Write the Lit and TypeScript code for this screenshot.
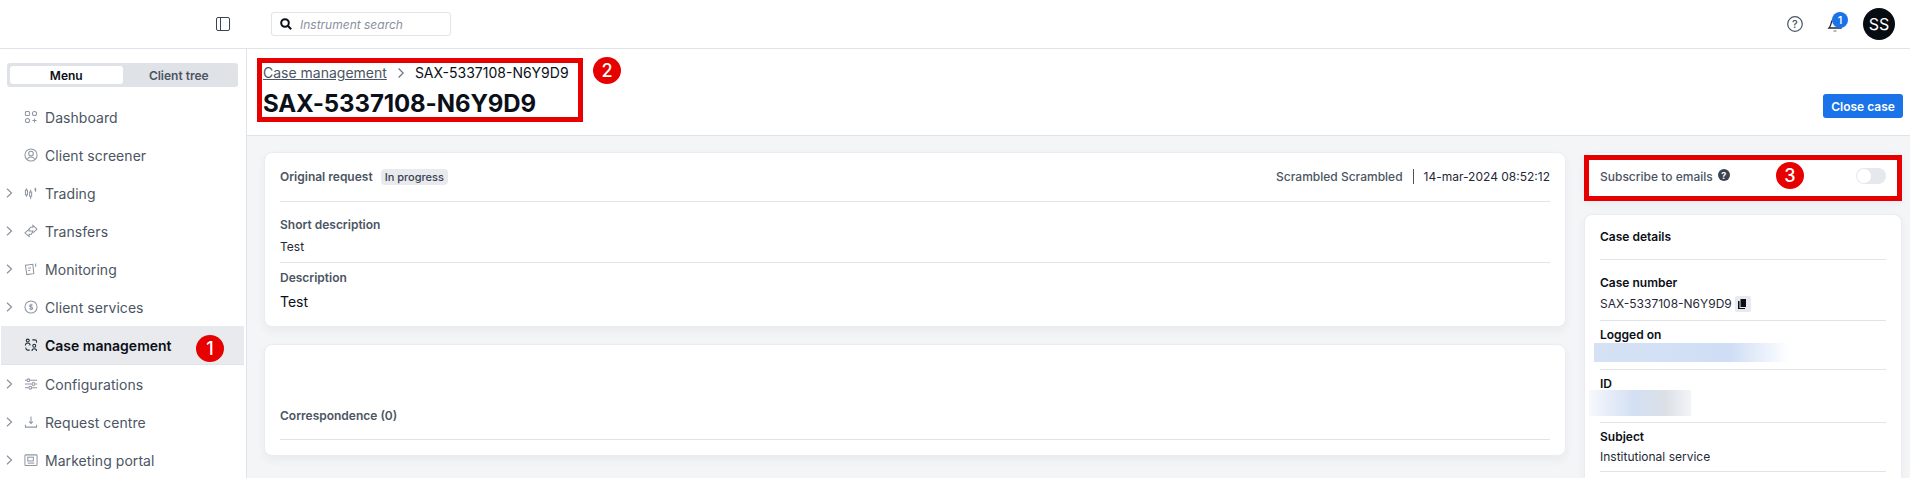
import { LitElement, html, css, svg } from "lit";
import { customElement } from "lit/decorators.js";

const ICONS: Record<string, unknown> = {
  dashboard: svg`<rect x="1.5" y="1.5" width="4.5" height="4.5" rx="1.2"/><rect x="9" y="1.5" width="4.5" height="4.5" rx="2.2"/><rect x="1.5" y="9" width="4.5" height="4.5" rx="2.2"/><path d="M11.2 9v4.5M9 11.2h4.5"/>`,
  client: svg`<circle cx="7.5" cy="7.5" r="6.5"/><circle cx="7.5" cy="6" r="2.5"/><path d="M3.500 12.500c.8-2 2.200-2.800 4-2.800s3.200.8 4 2.800"/>`,
  trading: svg`<rect x="1.500" y="4.500" width="2.200" height="5"/><path d="M2.600 2.500v2M2.600 9.500v2"/><rect x="6" y="6.500" width="2.200" height="4.500"/><path d="M7.100 4v2.500M7.100 11v3"/><path d="M13 3c-1.200-.6-1.800.4-.8 1s.4 1.700-.8 1M12.400 2v4.200"/>`,
  transfers: svg`<path d="M1 9.500 5.500 5.500V7.500H9.500L8 11H5.500V13.500Z"/><path d="M14 5.500 9.500 1.500V3.500H7L5.500 5.500"/><path d="M9.500 9.500 14 5.500"/>`,
  monitoring: svg`<path d="M1.500 3.500 9.500 2.500 10.500 12.500 3 13.500Z"/><path d="M4.500 6.500h3M4.500 9h2"/><path d="M12.500 1.500v3.500"/>`,
  services: svg`<circle cx="7.500" cy="7.500" r="6.500"/><path d="M9.200 5.800c-.6-.8-3.200-1-3.200.5s3.300.9 3.300 2.500-2.900 1.300-3.500.4M7.500 4v7"/>`,
  cases: svg`<circle cx="4" cy="2.800" r="1.600"/><path d="M1.500 8c0-1.800 1-2.600 2.500-2.600S6.500 6.200 6.500 8"/><circle cx="11" cy="8.300" r="1.600"/><path d="M8.500 14c0-1.800 1-2.600 2.500-2.600s2.500.8 2.500 2.600"/><path d="M9 2h2.500a2 2 0 0 1 2 2v1M6 13H4a2 2 0 0 1-2-2v-.800"/>`,
  config: svg`<path d="M1 3.500h2M6.500 3.500h7.500M1 7.500h7.500M12 7.500h2M1 11.500h4M8.500 11.500h5.500"/><circle cx="4.700" cy="3.500" r="1.500"/><circle cx="10.200" cy="7.500" r="1.500"/><circle cx="6.700" cy="11.500" r="1.500"/>`,
  request: svg`<path d="M7.500 1.500v7.500M5.500 7l2 2 2-2M1.500 10.500v2.500h12v-2.500"/>`,
  marketing: svg`<rect x="1" y="2" width="13" height="11.500" rx="1"/><rect x="4" y="4.500" width="6" height="4"/><path d="M4 10.800h7"/>`,
};

const NAV = [
  { label: "Dashboard", icon: "dashboard" },
  { label: "Client screener", icon: "client" },
  { label: "Trading", icon: "trading", more: true },
  { label: "Transfers", icon: "transfers", more: true },
  { label: "Monitoring", icon: "monitoring", more: true },
  { label: "Client services", icon: "services", more: true },
  { label: "Case management", icon: "cases", active: true },
  { label: "Configurations", icon: "config", more: true },
  { label: "Request centre", icon: "request", more: true },
  { label: "Marketing portal", icon: "marketing", more: true },
];

@customElement("app-root")
export class AppRoot extends LitElement {
  static styles = css`
    :host {
      display: block;
      position: relative;
      height: 478px;
      overflow: hidden;
      background: #fff;
      font-family: Inter, "Liberation Sans", sans-serif;
      font-size: 13px;
      color: #0b0f17;
    }
    .top {
      height: 48px;
      border-bottom: 1px solid #e0e3e9;
      display: flex;
      align-items: center;
    }
    .panel {
      margin-left: 216px;
      width: 12px;
      height: 12px;
      border: 1px solid #3b4453;
      border-radius: 2px;
      display: flex;
    }
    .panel i { width: 3px; border-right: 1px solid #3b4453; }
    .search {
      margin-left: 41px;
      width: 170px;
      height: 22px;
      border: 1px solid #e0e3e9;
      border-radius: 3px;
      display: flex;
      align-items: center;
      gap: 8px;
      padding-left: 8px;
      color: #8a919e;
      font-style: italic;
      font-size: 12px;
    }
    .search svg { fill: none; stroke: #0b0f17; stroke-width: 2; }
    .top-right {
      margin-left: auto;
      margin-right: 15px;
      display: flex;
      align-items: center;
    }
    .help { fill: none; stroke: #4b5563; stroke-width: 1.2; margin-right: 24px; }
    .help text {
      font: 500 11px Inter, sans-serif;
      fill: #4b5563;
      stroke: none;
    }
    .bell { position: relative; width: 20px; height: 20px; margin-right: 16px; }
    .bell svg { fill: none; stroke: #1f2937; stroke-width: 1.3; }
    .bell .clap { stroke: #8a919e; }
    .bell span {
      position: absolute;
      top: -2px;
      left: 5px;
      width: 16px;
      height: 16px;
      border-radius: 50%;
      background: #1a73e8;
      color: #fff;
      font-size: 11px;
      font-weight: 500;
      display: flex;
      align-items: center;
      justify-content: center;
    }
    .avatar {
      width: 32px;
      height: 32px;
      border-radius: 50%;
      background: #070b12;
      color: #fff;
      font-size: 16px;
      display: flex;
      align-items: center;
      justify-content: center;
    }
    .body { display: flex; height: 429px; }
    .side {
      width: 246px;
      flex: none;
      border-right: 1px solid #e0e3e9;
      padding-top: 14px;
    }
    .seg {
      margin: 0 8px 0 7px;
      height: 24px;
      background: #dfe2e6;
      border-radius: 3px;
      display: flex;
      padding: 3px;
      box-sizing: border-box;
      font-size: 12px;
      font-weight: 600;
      color: #4b5563;
    }
    .seg div {
      flex: 1;
      display: flex;
      align-items: center;
      justify-content: center;
      border-radius: 3px;
    }
    .seg .on { background: #fff; color: #0b0f17; }
    .nav { margin-top: 11px; }
    .item {
      height: 38px;
      margin: 0 2px 0 1px;
      display: flex;
      align-items: center;
      font-size: 14px;
      color: #4b5563;
      letter-spacing: 0.05px;
    }
    .item.active {
      background: #e8eaed;
      color: #0b0f17;
      font-weight: 600;
      border-bottom: 1px solid #e0e3e9;
      letter-spacing: 0;
    }
    .chev { width: 23px; flex: none; padding-left: 5px; box-sizing: border-box; display: flex; }
    .chev svg { fill: none; stroke: #8a919e; stroke-width: 1.2; }
    .ico { fill: none; stroke: #8f96a2; stroke-width: 1.1; margin-right: 7px; flex: none; }
    .active .ico { stroke: #1f2937; }
    .content { flex: 1; display: flex; flex-direction: column; background: #f4f5f7; min-width: 0; }
    .head {
      height: 86px;
      background: #fff;
      border-bottom: 1px solid #e0e3e9;
      padding-left: 16px;
      padding-right: 7px;
      display: flex;
      justify-content: space-between;
    }
    .crumbs {
      padding-top: 15px;
      display: flex;
      align-items: center;
      font-size: 14px;
      line-height: 18px;
      color: #0b0f17;
    }
    .crumbs a { color: #4b5563; text-decoration: underline; }
    .crumbs svg { fill: none; stroke: #6b7280; stroke-width: 1.2; margin: 0 11px; }
    h1 {
      margin: 5px 0 0;
      font-size: 24px;
      line-height: 34px;
      font-weight: 700;
      letter-spacing: -0.1px;
    }
    .close {
      align-self: flex-end;
      margin-bottom: 17px;
      width: 80px;
      height: 24px;
      background: #1a73e8;
      color: #fff;
      border-radius: 3px;
      font-size: 12px;
      font-weight: 600;
      display: flex;
      align-items: center;
      justify-content: center;
    }
    .main {
      flex: 1;
      display: flex;
      gap: 18px;
      padding: 16px 8px 0 17px;
      min-height: 0;
    }
    .col { flex: 1; display: flex; flex-direction: column; gap: 17px; min-width: 0; }
    .aside { width: 318px; flex: none; display: flex; flex-direction: column; gap: 14px; }
    .card {
      background: #fff;
      border: 1px solid #ebedf0;
      border-radius: 8px;
      box-shadow: 0 4px 10px rgba(30, 40, 60, 0.05);
      padding: 0 15px;
    }
    .row-h {
      height: 46px;
      padding-bottom: 2px;
      border-bottom: 1px solid #e0e3e9;
      display: flex;
      align-items: center;
      justify-content: space-between;
    }
    .lab { font-size: 12px; font-weight: 600; color: #4b5563; line-height: 16px; }
    .badge {
      margin-left: 8px;
      display: inline-block;
      background: #e8eaed;
      color: #374151;
      border-radius: 4px;
      font-size: 11px;
      font-weight: 500;
      padding: 0 4px;
      line-height: 16px;
    }
    .meta { display: flex; align-items: center; font-size: 12px; }
    .meta b { font-weight: 500; color: #4b5563; padding-right: 10px; border-right: 1px solid #4b5563; line-height: 15px; }
    .meta span { padding-left: 10px; color: #1f2937; }
    .sec1 { height: 61px; border-bottom: 1px solid #e0e3e9; padding-top: 15px; box-sizing: border-box; }
    .sec1 p { margin: 6px 0 0; font-size: 12px; line-height: 16px; color: #1f2937; }
    .sec2 { padding-top: 7px; height: 63px; box-sizing: border-box; }
    .sec2 p { margin: 7px 0 0; font-size: 14px; line-height: 18px; }
    .card2 { height: 112px; box-sizing: border-box; display: flex; flex-direction: column; justify-content: flex-end; padding-bottom: 15px; }
    .card2 .lab { padding-bottom: 15px; border-bottom: 1px solid #e0e3e9; }
    .sub {
      height: 48px;
      box-sizing: border-box;
      display: flex;
      align-items: center;
      justify-content: space-between;
      font-size: 12px;
      font-weight: 500;
      color: #4b5563;
    }
    .q {
      display: inline-flex;
      width: 12px;
      height: 12px;
      margin-left: 5px;
      background: #3b4453;
      color: #fff;
      border-radius: 50%;
      font-size: 9px;
      font-weight: 700;
      align-items: center;
      justify-content: center;
      vertical-align: 2px;
    }
    .switch { width: 30px; height: 16px; border-radius: 8px; background: #e5e8ec; padding: 1px; box-sizing: border-box; }
    .switch i { display: block; width: 14px; height: 14px; background: #fff; border-radius: 50%; }
    .details { flex: 1; border-bottom: none; border-radius: 8px 8px 0 0; }
    .ttl { height: 45px; padding-top: 14px; box-sizing: border-box; border-bottom: 1px solid #e0e3e9; font-size: 12px; font-weight: 600; line-height: 16px; }
    .f { border-bottom: 1px solid #e0e3e9; box-sizing: border-box; font-size: 12px; line-height: 16px; }
    .f b { display: block; font-weight: 600; }
    .f1 { height: 61px; padding-top: 15px; }
    .f1 div { margin-top: 5px; display: flex; align-items: center; gap: 3px; color: #1f2937; }
    .copy { width: 16px; height: 16px; background: #e8eaed; border-radius: 2px; display: flex; align-items: center; justify-content: center; }
    .copy svg { fill: #0b0f17; }
    .f2 { height: 49px; padding-top: 6px; }
    .f3 { height: 53px; padding-top: 6px; }
    .f4 { height: 49px; padding-top: 6px; }
    .f4 span { display: block; margin-top: 4px; color: #1f2937; }
    .blur1 { position: absolute; left: 1594px; top: 343px; width: 196px; height: 19px;
      background: linear-gradient(90deg, #d5e2f5, #d0def5 70%, #fff); }
    .blur2 { position: absolute; left: 1589px; top: 390px; width: 102px; height: 26px;
      background: linear-gradient(90deg, #f6f8fc, #d2dff3 45%, #dce0e6 75%, #f3f4f6); }
    .mark { position: absolute; border: 5px solid #e60000; box-sizing: border-box; }
    .m2 { left: 257px; top: 58px; width: 326px; height: 64px; }
    .m3 { left: 1584px; top: 155px; width: 318px; height: 46px; }
    .num {
      position: absolute;
      width: 28px;
      height: 27px;
      border-radius: 50%;
      background: #e60000;
      color: #fff;
      font-size: 18px;
      font-weight: 500;
      display: flex;
      align-items: center;
      justify-content: center;
    }
    .n1 { left: 196px; top: 335px; }
    .n2 { left: 593px; top: 57px; }
    .n3 { left: 1776px; top: 162px; }
  `;

  render() {
    return html`
      <div class="top">
        <div class="panel"><i></i></div>
        <div class="search">
          <svg width="12" height="12" viewBox="0 0 12 12"><circle cx="5" cy="5" r="3.800"/><path d="M8 8l3.200 3.200"/></svg>
          Instrument search
        </div>
        <div class="top-right">
          <svg class="help" width="16" height="16" viewBox="0 0 16 16"><circle cx="8" cy="8" r="7.300"/><text x="8" y="12" text-anchor="middle">?</text></svg>
          <div class="bell">
            <svg width="20" height="20" viewBox="0 0 20 20"><path d="M2 14c1.500-1.500 2-4 2.500-6S7 4 9 4s4 1 4.500 4 .5 5 .5 6Z"/><path class="clap" d="M6.500 17h3"/></svg>
            <span>1</span>
          </div>
          <div class="avatar">SS</div>
        </div>
      </div>
      <div class="body">
        <div class="side">
          <div class="seg"><div class="on">Menu</div><div>Client tree</div></div>
          <div class="nav">
            ${NAV.map(
              (n) => html`<div class="item ${n.active ? "active" : ""}">
                <span class="chev">${n.more
                  ? html`<svg width="7" height="10" viewBox="0 0 7 10"><path d="M1 .800 5.500 5 1 9.200"/></svg>`
                  : ""}</span>
                <svg class="ico" width="14" height="14" viewBox="0 0 15 15">${ICONS[n.icon]}</svg>
                <span>${n.label}</span>
              </div>`
            )}
          </div>
        </div>
        <div class="content">
          <div class="head">
            <div>
              <div class="crumbs">
                <a>Case management</a>
                <svg width="6" height="12" viewBox="0 0 6 12"><path d="M.600 1.500 5.200 6 .600 10.500"/></svg>
                <span>SAX-5337108-N6Y9D9</span>
              </div>
              <h1>SAX-5337108-N6Y9D9</h1>
            </div>
            <div class="close">Close case</div>
          </div>
          <div class="main">
            <div class="col">
              <div class="card">
                <div class="row-h">
                  <div><span class="lab">Original request</span><span class="badge">In progress</span></div>
                  <div class="meta"><b>Scrambled Scrambled</b><span>14-mar-2024 08:52:12</span></div>
                </div>
                <div class="sec1"><div class="lab">Short description</div><p>Test</p></div>
                <div class="sec2"><div class="lab">Description</div><p>Test</p></div>
              </div>
              <div class="card card2"><div class="lab">Correspondence (0)</div></div>
            </div>
            <div class="aside">
              <div class="card sub">
                <span>Subscribe to emails<span class="q">?</span></span>
                <div class="switch"><i></i></div>
              </div>
              <div class="card details">
                <div class="ttl">Case details</div>
                <div class="f f1"><b>Case number</b><div>SAX-5337108-N6Y9D9<span class="copy"><svg width="9" height="10" viewBox="0 0 9 10"><path d="M2.500 0H8v8H2.500Z"/><path d="M0 2h1.500v7H7v1H0Z"/></svg></span></div></div>
                <div class="f f2"><b>Logged on</b></div>
                <div class="f f3"><b>ID</b></div>
                <div class="f f4"><b>Subject</b><span>Institutional service</span></div>
              </div>
            </div>
          </div>
        </div>
      </div>
      <div class="blur1"></div>
      <div class="blur2"></div>
      <div class="mark m2"></div>
      <div class="mark m3"></div>
      <div class="num n1">1</div>
      <div class="num n2">2</div>
      <div class="num n3">3</div>
    `;
  }
}
